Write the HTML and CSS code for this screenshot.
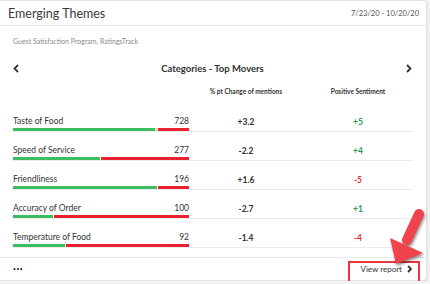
FILE: index.html
```html
<!DOCTYPE html>
<html lang="en">

<head>
    <meta charset="UTF-8">
    <meta name="viewport" content="width=device-width, initial-scale=1.0">
    <title>Emerging Themes</title>
    <link rel="stylesheet" href="styles.css">
</head>

<body>
    <div class="card">
        <div class="card-header">
            <h1 class="card-title">Emerging Themes</h1>
            <span class="date-range">7/23/20 - 10/20/20</span>
        </div>

        <div class="card-body">
            <p class="program">Guest Satisfaction Program, RatingsTrack</p>

            <div class="nav">
                <svg class="chevron" width="6" height="9" viewBox="0 0 6 9"><path d="M5 1 L1.5 4.5 L5 8" /></svg>
                <h2 class="nav-title">Categories - Top Movers</h2>
                <svg class="chevron" width="6" height="9" viewBox="0 0 6 9"><path d="M1 1 L4.5 4.5 L1 8" /></svg>
            </div>

            <div class="movers">
                <div class="col-head"></div>
                <div class="col-head">% pt Change of mentions</div>
                <div class="col-head">Positive Sentiment</div>

                <!-- Taste of Food -->
                <div class="cell-topic">
                    <div class="topic-line"><span>Taste of Food</span><span>728</span></div>
                    <div class="bar">
                        <span class="seg seg-pos" style="flex-grow: 142"></span>
                        <span class="seg seg-neu" style="flex-grow: 1"></span>
                        <span class="seg seg-neg" style="flex-grow: 31"></span>
                    </div>
                </div>
                <div class="cell-value">+3.2</div>
                <div class="cell-value up">+5</div>

                <!-- Speed of Service -->
                <div class="cell-topic">
                    <div class="topic-line"><span>Speed of Service</span><span>277</span></div>
                    <div class="bar">
                        <span class="seg seg-pos" style="flex-grow: 87"></span>
                        <span class="seg seg-neg" style="flex-grow: 88"></span>
                    </div>
                </div>
                <div class="cell-value">-2.2</div>
                <div class="cell-value up">+4</div>

                <!-- Friendliness -->
                <div class="cell-topic">
                    <div class="topic-line"><span>Friendliness</span><span>196</span></div>
                    <div class="bar">
                        <span class="seg seg-pos" style="flex-grow: 144"></span>
                        <span class="seg seg-neg" style="flex-grow: 31"></span>
                    </div>
                </div>
                <div class="cell-value">+1.6</div>
                <div class="cell-value down">-5</div>

                <!-- Accuracy of Order -->
                <div class="cell-topic">
                    <div class="topic-line"><span>Accuracy of Order</span><span>100</span></div>
                    <div class="bar">
                        <span class="seg seg-pos" style="flex-grow: 40"></span>
                        <span class="seg seg-neg" style="flex-grow: 135"></span>
                    </div>
                </div>
                <div class="cell-value">-2.7</div>
                <div class="cell-value up">+1</div>

                <!-- Temperature of Food -->
                <div class="cell-topic">
                    <div class="topic-line"><span>Temperature of Food</span><span>92</span></div>
                    <div class="bar">
                        <span class="seg seg-pos" style="flex-grow: 52"></span>
                        <span class="seg seg-neg" style="flex-grow: 123"></span>
                    </div>
                </div>
                <div class="cell-value">-1.4</div>
                <div class="cell-value down">-4</div>
            </div>
        </div>

        <div class="card-footer">
            <span class="more">&bull;&bull;&bull;</span>
            <a class="view-report" href="#">View report
                <svg class="chevron chevron-small" width="5" height="8" viewBox="0 0 5 8"><path d="M1 1 L4 4 L1 7" /></svg>
            </a>
        </div>

        <!-- annotation laid over the card -->
        <div class="highlight-box"></div>
        <svg class="callout-arrow" width="50" height="64" viewBox="0 0 50 64">
            <path class="arrow-shaft" d="M37 6 L25 32" />
            <polygon class="arrow-head" points="8,30 41,45 14,56" />
        </svg>
    </div>
</body>

</html>
```

FILE: styles.css
```css
body {
    margin: 0;
    background-color: #f4f4f4;
    font-family: Lato, 'Open Sans', sans-serif;
    color: #333;
}

.card {
    position: relative;
    width: 427px;
    background-color: white;
    border: 1px solid #e2e2e2;
    border-left: none;
    border-radius: 0 4px 4px 0;
    box-shadow: 0 2px 3px rgba(0, 0, 0, 0.12);
    box-sizing: border-box;
}

.card-header {
    display: flex;
    justify-content: space-between;
    align-items: center;
    height: 24px;
    padding: 0 7px 0 8px;
    border-bottom: 1px solid #e8e8e8;
}

.card-title {
    margin: 0;
    font-size: 12.5px;
    font-weight: 400;
    color: #3a3a3a;
}

.date-range {
    font-size: 7.5px;
    color: #555;
}

.card-body {
    padding: 10px 14px 9px 13px;
}

.program {
    margin: 0;
    font-size: 7px;
    line-height: 10px;
    color: #8a8a8a;
}

.nav {
    display: flex;
    justify-content: space-between;
    align-items: center;
    height: 14px;
    margin-top: 15px;
}

.nav-title {
    margin: 0;
    font-size: 9.5px;
    font-weight: 700;
    color: #333;
}

.chevron path {
    fill: none;
    stroke: #333;
    stroke-width: 1.8;
}

.movers {
    display: grid;
    grid-template-columns: 176px 114px 110px;
    margin-top: 13px;
}

.col-head {
    height: 15px;
    font-size: 6.5px;
    font-weight: 700;
    text-align: center;
    color: #333;
}

.cell-topic {
    height: 29px;
    padding-top: 12px;
    box-sizing: border-box;
    border-bottom: 1px solid #ececec;
}

.topic-line {
    display: flex;
    justify-content: space-between;
    height: 12px;
    font-size: 8.5px;
    line-height: 12px;
    color: #333;
}

.bar {
    display: flex;
    gap: 1px;
    height: 3px;
    margin-top: 1px;
}

.seg {
    display: block;
    height: 100%;
}

.seg-pos {
    background-color: #3dbd63;
}

.seg-neu {
    background-color: #f5a623;
}

.seg-neg {
    background-color: #e8222e;
}

.cell-value {
    height: 29px;
    padding-top: 13px;
    box-sizing: border-box;
    border-bottom: 1px solid #ececec;
    font-size: 8.5px;
    font-weight: 700;
    line-height: 12px;
    text-align: center;
}

.up {
    color: #2e9b57;
}

.down {
    color: #ea2f38;
}

.card-footer {
    display: flex;
    justify-content: space-between;
    align-items: center;
    height: 22px;
    padding: 0 14px 0 13px;
    border-top: 1px solid #ececec;
}

.more {
    font-size: 5px;
    letter-spacing: 0.5px;
    color: #222;
}

.view-report {
    display: flex;
    align-items: center;
    gap: 5px;
    font-size: 8px;
    color: #333;
    text-decoration: none;
}

.highlight-box {
    position: absolute;
    left: 348px;
    top: 260px;
    width: 72px;
    height: 22px;
    border: 2px solid #e8373e;
    box-sizing: border-box;
}

.callout-arrow {
    position: absolute;
    left: 382px;
    top: 207px;
    overflow: visible;
    filter: drop-shadow(1px 2px 1.5px rgba(0, 0, 0, 0.45));
}

.arrow-shaft {
    stroke: #f1434b;
    stroke-width: 10;
    stroke-linecap: round;
}

.arrow-head {
    fill: #f1434b;
}
```
